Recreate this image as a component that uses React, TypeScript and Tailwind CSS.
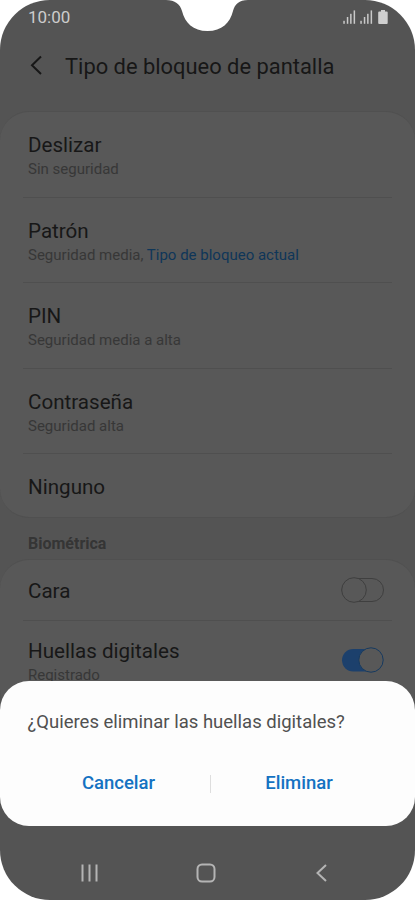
import React from 'react'

interface LockOption {
  title: string
  detail?: string
  current?: string
}

const lockOptions: LockOption[] = [
  { title: 'Deslizar', detail: 'Sin seguridad' },
  { title: 'Patrón', detail: 'Seguridad media, ', current: 'Tipo de bloqueo actual' },
  { title: 'PIN', detail: 'Seguridad media a alta' },
  { title: 'Contraseña', detail: 'Seguridad alta' },
]

const SignalIcon = () => (
  <svg width="13" height="14" viewBox="0 0 13 14" fill="#c9c9c9">
    <rect x="0.3" y="10.8" width="1.5" height="3" />
    <rect x="3.8" y="7" width="1.5" height="6.8" />
    <rect x="7.1" y="3.8" width="1.5" height="10" />
    <rect x="10.6" y="0.4" width="1.5" height="13.4" />
  </svg>
)

const StatusBar = () => (
  <div className="flex h-[35px] items-start justify-between pl-7 pr-[27px] text-[#cccccc]">
    <span className="mt-[5px] text-[17px] leading-6">10:00</span>
    <div className="mt-[10px] flex items-start">
      <SignalIcon />
      <span className="w-1" />
      <SignalIcon />
      <svg className="ml-[5px]" width="10" height="15" viewBox="0 0 10 15" fill="#cfcfcf">
        <path d="M3 0h4v1.500h1.700a1 1 0 0 1 1 1V13a1 1 0 0 1-1 1H1.200a1 1 0 0 1-1-1V2.500a1 1 0 0 1 1-1H3z" />
      </svg>
    </div>
  </div>
)

const Toggle: React.FC<{ on?: boolean }> = ({ on }) => (
  <svg width="44" height="28" viewBox="0 0 44 28" fill="none">
    {on ? (
      <>
        <rect x="1" y="3" width="41" height="22.500" rx="11.250" fill="#1c406c" />
        <circle cx="30" cy="14" r="12.200" fill="#585858" stroke="#163a60" />
      </>
    ) : (
      <>
        <rect x="1" y="2.500" width="41.500" height="23" rx="11.500" stroke="#3f3f3f" />
        <circle cx="13" cy="14" r="12.300" fill="#585858" stroke="#3f3f3f" />
      </>
    )}
  </svg>
)

const Divider = () => <div className="mx-[23px] h-px shrink-0 bg-[#4f4f4f]" />

const ConfirmDialog = () => (
  <div className="absolute inset-x-0 top-[681px] flex h-[145px] flex-col rounded-[29px] bg-[#fdfdfd]">
    <p className="mt-[29px] pl-[27.5px] text-[18.5px] leading-6 whitespace-nowrap text-[#505050]">
      ¿Quieres eliminar las huellas digitales?
    </p>
    <div className="mt-[38px] flex h-6 items-center px-[27px] text-[18.5px] font-medium text-[#1472c2]">
      <button className="w-[183px]">Cancelar</button>
      <span className="h-[18px] w-px bg-[#dedede]" />
      <button className="flex-1 pr-px">Eliminar</button>
    </div>
  </div>
)

const NavigationBar = () => (
  <div className="absolute inset-x-0 bottom-0 flex h-[74px] pt-[37px] pl-[80px]">
    <svg width="19" height="20" viewBox="0 0 19 20" stroke="#b4b4b4" strokeWidth="2">
      <path d="M2.500 1.500v17M9.500 1.500v17M16.500 1.500v17" />
    </svg>
    <svg className="ml-[96.5px]" width="20" height="20" viewBox="0 0 20 20" fill="none" stroke="#b4b4b4" strokeWidth="2">
      <rect x="1.500" y="1.500" width="17" height="17" rx="4.500" />
    </svg>
    <svg className="ml-[99.5px]" width="13" height="20" viewBox="0 0 13 20" fill="none" stroke="#b4b4b4" strokeWidth="2">
      <path d="M11 2L2.500 10l8.500 8" />
    </svg>
  </div>
)

export default function App() {
  return (
    <div className="h-[900px] w-[415px] overflow-hidden bg-white font-['Roboto','Liberation_Sans',sans-serif]">
      <div className="relative h-[900px] overflow-hidden rounded-[50px] bg-[#545454] text-[#171717]">
        <StatusBar />
        <header className="flex h-[76px] items-start pl-[30px]">
          <svg className="mt-5" width="13" height="21" viewBox="0 0 13 21" fill="none" stroke="#171717" strokeWidth="2">
            <path d="M11 1.500L2 10.300l9 8.700" />
          </svg>
          <h1 className="mt-[16px] ml-[22px] text-[21.9px] leading-8 whitespace-nowrap">Tipo de bloqueo de pantalla</h1>
        </header>

        <section className="h-[407px] rounded-[29px] border-y border-[#505050] bg-[#585858]">
          {lockOptions.map((option) => (
            <div key={option.title}>
              <div className="flex h-[84.500px] flex-col pt-[19px] pl-7">
                <span className="text-[20.6px] leading-7">{option.title}</span>
                <span className="text-[15px] leading-5 whitespace-pre text-[#373737]">
                  {option.detail}
                  {option.current && <span className="text-[#0f3658]">{option.current}</span>}
                </span>
              </div>
              <Divider />
            </div>
          ))}
          <div className="pt-[19px] pl-7 text-[20.6px] leading-7">Ninguno</div>
        </section>

        <h2 className="flex h-[41px] items-center pt-[10px] pl-7 text-[16px] font-bold text-[#353535]">Biométrica</h2>

        <section className="h-[160px] rounded-[29px] border-y border-[#505050] bg-[#585858]">
          <div className="flex h-[60px] items-center justify-between pr-[30px] pl-7">
            <span className="mt-px text-[20.6px] leading-7">Cara</span>
            <span className="-mt-px">
              <Toggle />
            </span>
          </div>
          <Divider />
          <div className="flex items-start justify-between pt-4 pr-[30px] pl-7">
            <div className="flex flex-col">
              <span className="text-[20.6px] leading-7">Huellas digitales</span>
              <span className="text-[15px] leading-5 text-[#373737]">Registrado</span>
            </div>
            <span className="mt-[9px]">
              <Toggle on />
            </span>
          </div>
        </section>

        {/* camera cutout */}
        <svg className="absolute top-0 left-[162px]" width="92" height="32" viewBox="0 0 92 32" fill="#ffffff">
          <path d="M4 0C13 0 18 4 20 11C23 23 31 31 45.500 31C60 31 68 23 71 11C73 4 77 0 86 0Z" />
        </svg>
        <ConfirmDialog />
        <NavigationBar />
      </div>
    </div>
  )
}
